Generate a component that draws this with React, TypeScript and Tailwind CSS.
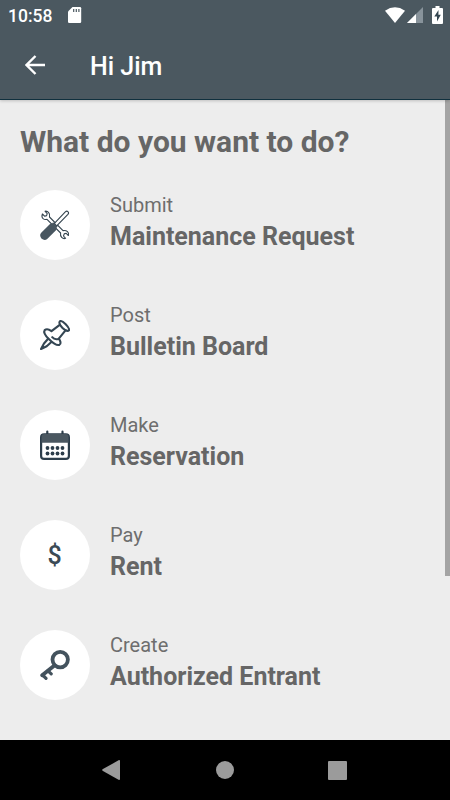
import React from 'react'

interface Action {
  verb: string
  subject: string
  icon: React.ReactNode
}

const ToolsIcon = () => (
  <svg viewBox="0 0 30 30" className="h-[30px] w-[30px]" fill="none" stroke="#34444f" strokeLinejoin="round">
    <path
      strokeWidth="1.1"
      fill="#fff"
      d="M5 1.2 7.2 3.6 6.6 5.6 4.6 6.2 2.4 4C1.6 6 2 7.8 3.4 8.9 4.6 9.8 5.9 9.6 7 9.3L20.6 23C20.3 24.5 20.5 26.2 21.7 27.4 22.9 28.6 24.4 28.8 25.6 28.3L23.5 26 24.2 23.9 26.2 23.3 28.4 25.5C29 24 28.6 22.6 27.5 21.6 26.2 20.5 24.6 20.3 23 20.6L9.5 7C9.9 5.4 9.8 3.8 8.7 2.6 7.7 1.4 6.3.9 5 1.2Z"
    />
    <path strokeWidth="1.1" fill="#fff" d="M14.4 13.3 25.3 1.9Q26.8.6 27.9 1.7 29.2 2.9 27.9 4.4L16.7 15.8Z" />
    <path stroke="none" fill="#485660" d="M12 13.4 13.2 12.2 17.6 16.6 16.5 17.8 16 20.2 7.2 29Q4.6 31.2 1.4 28.5-1 25.2 1.2 22.7L10 14Z" />
  </svg>
)

const PinIcon = () => (
  <svg viewBox="0 0 30 30" className="h-[30px] w-[30px]" fill="none" stroke="#344653" strokeWidth="2.1" strokeLinejoin="round" strokeLinecap="round">
    <path d="M20 1.2C18.7 2.4 19.7 4.8 22.3 7.7 25.1 10.4 27.8 11.4 29 10.2 29.7 8.7 28.2 7 25.7 4.3 23.2 1.8 21.3.4 20 1.2Z" />
    <path d="M19.7 4.8 11.5 11.2C9.3 9.5 6.5 8.6 4.7 10.1 3.3 12.3 5.3 15.6 8.8 19 12.6 22.8 16.5 25.8 19.3 24.9 21.5 23.7 20.5 21 18.8 18.7L25.5 10.3" />
    <path d="M12.2 17.2C13.7 19 15.8 19.6 18.4 18.9" />
    <path d="M8.1 18.8 4 23.5 1 29 6.7 26.2 11.4 22" />
  </svg>
)

const CalendarIcon = () => (
  <svg viewBox="0 0 30 30" className="h-[30px] w-[30px]" fill="#2c3d4a">
    <rect x="6.2" y="0.6" width="2.2" height="5" rx="1.1" />
    <rect x="21.4" y="0.6" width="2.2" height="5" rx="1.1" />
    <rect x="1.1" y="4.4" width="27.8" height="24.5" rx="3" fill="#fff" stroke="#2c3d4a" strokeWidth="2.2" />
    <path fill="#4a5760" d="M1.5 12.8V7Q1.5 4 4 4H26Q28.5 4 28.5 7V12.8Z" />
    {[18, 23.5].map(y => [7.5, 12.5, 17.5, 22.5].map(x => <circle key={`${x}-${y}`} cx={x} cy={y} r="1.9" />))}
  </svg>
)

const KeyIcon = () => (
  <svg viewBox="0 0 30 30" className="h-[30px] w-[30px]" fill="none" stroke="#43525d" strokeWidth="3.8">
    <circle cx="20.2" cy="9.6" r="7.7" />
    <path strokeLinecap="round" strokeLinejoin="round" d="M14.4 15.4 2.2 25.2" />
    <path strokeWidth="3.2" strokeLinecap="round" d="M2.6 25 6 28.3M8 20.8 11.2 23.8" />
  </svg>
)

const actions: Action[] = [
  { verb: 'Submit', subject: 'Maintenance Request', icon: <ToolsIcon /> },
  { verb: 'Post', subject: 'Bulletin Board', icon: <PinIcon /> },
  { verb: 'Make', subject: 'Reservation', icon: <CalendarIcon /> },
  { verb: 'Pay', subject: 'Rent', icon: <span className="mt-px mr-px text-[25px] leading-none font-medium text-[#3b4a55]">$</span> },
  { verb: 'Create', subject: 'Authorized Entrant', icon: <KeyIcon /> },
]

const StatusBar = () => (
  <div className="flex h-[30px] items-center pl-2 text-white">
    <span className="pt-[3px] text-[17.5px] leading-none font-medium">10:58</span>
    <svg viewBox="0 0 14 16" className="ml-4 h-4 w-3.5" fill="#fff">
      <path d="M4.5 0H12Q13.2 0 13.2 1.2V14.8Q13.2 16 12 16H1.2Q0 16 0 14.8V4.5Z" />
      <path stroke="#4b5860" strokeWidth="1.2" d="M5.7 2V5M8.3 2V5M10.9 2V5" />
    </svg>
    <div className="mr-[7px] ml-auto flex items-center">
      <svg viewBox="0 0 20 16" className="h-4 w-5" fill="#fff">
        <path d="M0 3.7Q10-3.2 20 3.7L10 16Z" />
      </svg>
      <svg viewBox="0 0 16 16" className="ml-0.5 h-4 w-4">
        <path fill="#88939b" d="M16 0V16H0Z" />
        <path fill="#fff" d="M9 7V16H0Z" />
      </svg>
      <svg viewBox="0 0 11 18" className="ml-[9px] h-[18px] w-[11px]">
        <path fill="#fff" d="M3.5 0H7.5V2H10Q11 2 11 3V17Q11 18 10 18H1Q0 18 0 17V3Q0 2 1 2H3.5Z" />
        <path fill="#344651" d="M6.5 4 2.3 10.6H5V15.5L8.8 8.8H6.4Z" />
      </svg>
    </div>
  </div>
)

const ActionRow = ({ verb, subject, icon }: Action) => (
  <button className="flex h-[70px] items-center text-left">
    <span className="flex h-[70px] w-[70px] items-center justify-center rounded-full bg-white">{icon}</span>
    <span className="ml-5 flex flex-col pb-[5px]">
      <span className="text-[20px] leading-[28px] text-[#6e6e6e]">{verb}</span>
      <span className="text-[25px] leading-[36px] font-bold text-[#666]">{subject}</span>
    </span>
  </button>
)

export default function App() {
  return (
    <div className="flex h-[800px] w-[450px] flex-col overflow-hidden bg-[#ededed] font-['Roboto',sans-serif]">
      <header className="z-10 h-[100px] shrink-0 border-b border-[#10303e] bg-[#4b5860] shadow-[0_1px_3px_rgba(0,0,0,0.2)]">
        <StatusBar />
        <div className="flex h-[70px] items-center pl-[25px] text-white">
          <svg viewBox="0 0 20 20" className="h-5 w-5" fill="none" stroke="#fff" strokeWidth="2.4">
            <path d="M20 10H2M10.5 1 1.5 10 10.5 19" />
          </svg>
          <h1 className="ml-[45px] pt-0.5 text-[25px] leading-none font-medium">Hi Jim</h1>
        </div>
      </header>

      <main className="flex flex-1 justify-between">
        <div className="pl-5">
          <h2 className="mt-[22px] text-[30px] leading-[40px] font-bold text-[#666]">What do you want to do?</h2>
          <div className="mt-7 flex flex-col gap-10">
            {actions.map(action => (
              <ActionRow key={action.verb} {...action} />
            ))}
          </div>
        </div>
        {/* Scrollbar */}
        <div className="h-[476px] w-[5px] bg-[#a4a4a4]" />
      </main>

      <nav className="flex h-[60px] shrink-0 items-center bg-black">
        <svg viewBox="0 0 18 20" className="ml-[102px] h-5 w-[18px]" fill="#9b9b9b">
          <path d="M.5 9.3 17 .1Q18 0 18 1V19Q18 20 17 19.9L.5 10.7Q0 10 .5 9.3Z" />
        </svg>
        <div className="ml-24 h-[18px] w-[18px] rounded-full bg-[#9b9b9b]" />
        <div className="ml-[94px] h-[19px] w-[19px] rounded-[1px] bg-[#9b9b9b]" />
      </nav>
    </div>
  )
}
